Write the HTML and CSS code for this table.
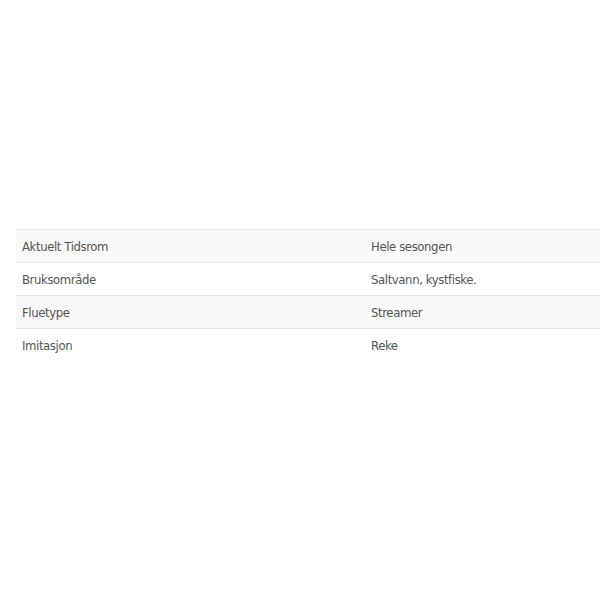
FILE: index.html
```html
<!DOCTYPE html>
<html lang="no">
<head>
<meta charset="utf-8">
<link rel="stylesheet" href="styles.css">
</head>
<body>
<div class="page">
  <table class="specs">
    <tbody>
      <tr class="odd"><td class="label">Aktuelt Tidsrom</td><td class="value">Hele sesongen</td></tr>
      <tr><td class="label">Bruksområde</td><td class="value">Saltvann, kystfiske.</td></tr>
      <tr class="odd"><td class="label">Fluetype</td><td class="value">Streamer</td></tr>
      <tr><td class="label">Imitasjon</td><td class="value">Reke</td></tr>
    </tbody>
  </table>
</div>
</body>
</html>
```
FILE: styles.css
```css
html, body {
  margin: 0;
  padding: 0;
  background: #fff;
  overflow: hidden;
}
.page {
  padding: 229px 0 0 16px;
}
.specs {
  width: 600px;
  border-collapse: collapse;
  font-family: "DejaVu Sans Condensed", "Liberation Sans Narrow", "Roboto", sans-serif;
  font-size: 13px;
  letter-spacing: -0.4px;
  color: #555;
}
.specs tr {
  border-top: 1px solid #e6e6e6;
}
.specs tr.odd {
  background: #f9f9f9;
}
.specs td {
  height: 31px;
  padding: 1px 6px 0;
  vertical-align: middle;
}
.specs td.label {
  width: 337px;
}
```
